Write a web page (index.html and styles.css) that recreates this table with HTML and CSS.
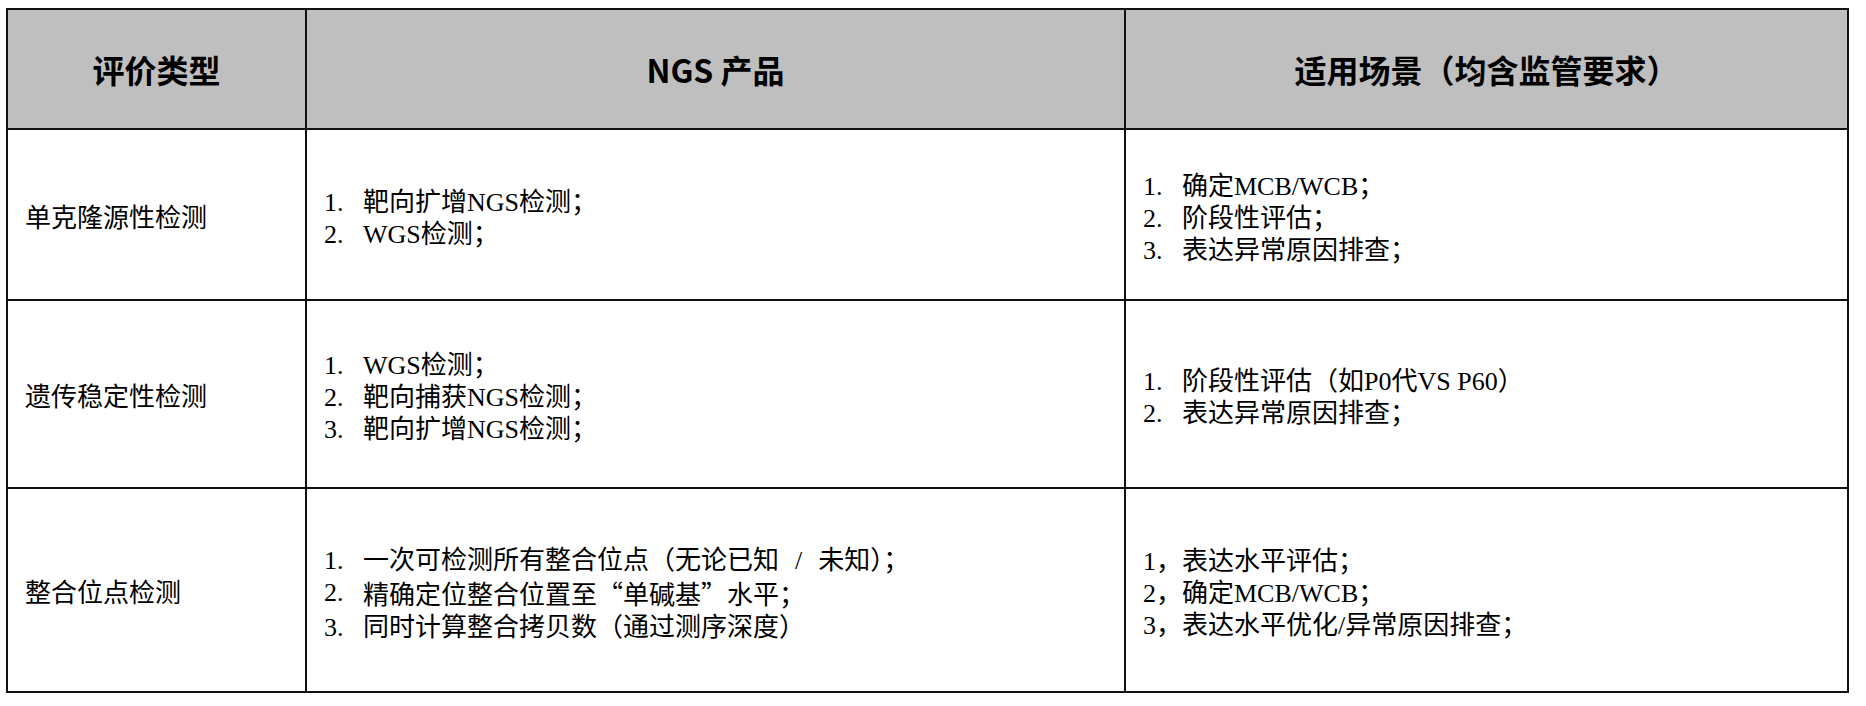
FILE: index.html
```html
<!DOCTYPE html>
<html lang="zh-CN">
<head>
<meta charset="utf-8">
<title>NGS 评价类型</title>
<link rel="stylesheet" href="styles.css">
</head>
<body>
<div class="sheet" role="table">
  <div class="cell head" role="columnheader">评价类型</div>
  <div class="cell head" role="columnheader">NGS 产品</div>
  <div class="cell head" role="columnheader">适用场景（均含监管要求）</div>

  <div class="cell body" role="cell">单克隆源性检测</div>
  <div class="cell body" role="cell">
    <ul class="list">
      <li><span class="num">1.</span><span>靶向扩增NGS检测；</span></li>
      <li><span class="num">2.</span><span>WGS检测；</span></li>
    </ul>
  </div>
  <div class="cell body" role="cell">
    <ul class="list">
      <li><span class="num">1.</span><span>确定MCB/WCB；</span></li>
      <li><span class="num">2.</span><span>阶段性评估；</span></li>
      <li><span class="num">3.</span><span>表达异常原因排查；</span></li>
    </ul>
  </div>

  <div class="cell body" role="cell">遗传稳定性检测</div>
  <div class="cell body" role="cell">
    <ul class="list">
      <li><span class="num">1.</span><span>WGS检测；</span></li>
      <li><span class="num">2.</span><span>靶向捕获NGS检测；</span></li>
      <li><span class="num">3.</span><span>靶向扩增NGS检测；</span></li>
    </ul>
  </div>
  <div class="cell body" role="cell">
    <ul class="list">
      <li><span class="num">1.</span><span>阶段性评估（如P0代VS P60）</span></li>
      <li><span class="num">2.</span><span>表达异常原因排查；</span></li>
    </ul>
  </div>

  <div class="cell body" role="cell">整合位点检测</div>
  <div class="cell body" role="cell">
    <ul class="list">
      <li><span class="num">1.</span><span>一次可检测所有整合位点（无论已知<span class="slash">/</span>未知）；</span></li>
      <li><span class="num">2.</span><span>精确定位整合位置至<span class="cjk">“</span>单碱基<span class="cjk">”</span>水平；</span></li>
      <li><span class="num">3.</span><span>同时计算整合拷贝数（通过测序深度）</span></li>
    </ul>
  </div>
  <div class="cell body" role="cell">
    <ul class="list">
      <li><span class="num">1，</span><span>表达水平评估；</span></li>
      <li><span class="num">2，</span><span>确定MCB/WCB；</span></li>
      <li><span class="num">3，</span><span>表达水平优化/异常原因排查；</span></li>
    </ul>
  </div>
</div>
</body>
</html>
```

FILE: styles.css
```css
html, body {
  background: #ffffff;
}

body {
  margin: 0;
  padding: 8px 0 0 6px;
  color: #000;
}

.sheet {
  display: grid;
  grid-template-columns: 299px 819px 723px;
  grid-template-rows: 120px 171px 188px 204px;
  width: max-content;
  border-top: 2px solid #111;
  border-left: 2px solid #111;
}

.cell {
  box-sizing: border-box;
  border-right: 2px solid #111;
  border-bottom: 2px solid #111;
  display: flex;
  align-items: center;
  min-width: 0;
}

.head {
  background: #bfbfbf;
  justify-content: center;
  font-family: "Noto Sans CJK SC", "Noto Sans", sans-serif;
  font-weight: 700;
  font-size: 32px;
  line-height: 40px;
}

.body {
  padding: 8px 0 0 17px;
  font-family: "Liberation Serif", "Noto Sans CJK SC", serif;
  font-size: 26px;
  line-height: 32px;
}

.list {
  list-style: none;
  margin: 0;
  padding: 0;
}

.list li {
  display: flex;
  white-space: nowrap;
}

.num {
  flex: none;
  width: 39px;
}

.cjk {
  font-family: "Noto Sans CJK SC", serif;
}

.slash {
  margin: 0 16px;
}
```
